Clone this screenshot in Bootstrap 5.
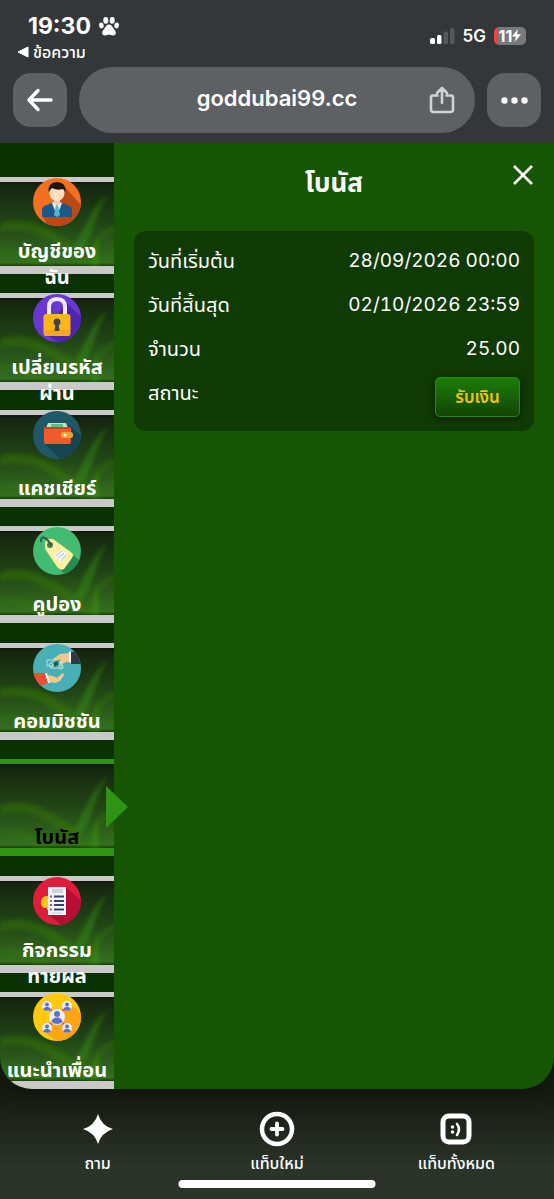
<!DOCTYPE html>
<html lang="th">
<head>
<meta charset="utf-8">
<meta name="viewport" content="width=device-width, initial-scale=1">
<title>โบนัส</title>
<link href="https://cdn.jsdelivr.net/npm/bootstrap@5.3.0/dist/css/bootstrap.min.css" rel="stylesheet">
<style>
body{font-family:Inter,"Noto Sans Thai","Noto Sans",sans-serif;color:#fff;background:#34373a}
svg{display:block}
.status{height:67px}
.clock{font-size:23px;font-weight:700;line-height:28px}
.back-app{font-size:16px;font-weight:500;line-height:24px;color:#fff}
.net{font-size:17px;font-weight:600;line-height:20px}
.batt{width:32px;height:18px;border-radius:5px;background:linear-gradient(90deg,#f2403a 4px,#77797b 4px);font-size:16px;font-weight:700;line-height:18px}
.addr{height:76px;padding:0 9px 10px}
.sq{width:54px;height:54px;border-radius:18px;background:#5e6164;border:0;color:#fff}
.pill{height:66px;border-radius:33px;background:#5e6164;min-width:0}
.url{font-size:22px;font-weight:600;line-height:28px;color:#fff;background:none;border:0;outline:0;text-align:center;min-width:0;width:0;padding:0 0 4px 30px}
.lower{overflow:hidden;background:linear-gradient(#34373a,#151a12 60px,#151a12 calc(100% - 110px),#1d2319 calc(100% - 80px),#2b3429 calc(100% - 30px),#2c332b)}
.app{background:#165503;border-radius:0 0 32px 32px;overflow:hidden;box-shadow:0 4px 20px #10150e}
.side{width:114px;background:#0a3102;padding-top:34px}
.tile{height:97px;border-top:5px solid #c9c9c9;border-bottom:8px solid #c9c9c9;color:#fff;background:linear-gradient(#14230f,#214415 50%,#356f1f 96%,#163e07)}
.tile:hover{color:#fff}
.tile.active{border-color:#2f9414;color:#000}
.swoosh{left:0;top:0;width:100%;height:100%}
.pic{left:33px;top:-4px;width:48px;height:48px}
.cap{left:0;right:0;top:56px;font-size:20px;font-weight:700;line-height:26px;white-space:nowrap}
.cap-one{top:60px}
.pointer{left:106px;top:22px;width:22px;height:42px;z-index:2}
.heading{font-size:26px;font-weight:700;line-height:32px}
.shut{right:20px;top:21px;border:0;background:none;color:#fff}
.info{background:#0f3a03;border-radius:12px;margin-top:32px;padding:8px 14px 6px;font-size:19px;line-height:24px;font-variant-numeric:tabular-nums}
.info dt{font-size:20px;font-weight:400;margin:0}
.line{height:44px}
.line dd{margin:0}
.state{padding-top:10px}
.claim{width:85px;height:40px;border:1px solid #2a8a12;border-radius:5px;background:linear-gradient(#1c7d06,#124502);color:#f1c40f;font-size:17px;font-weight:600;line-height:24px;padding:0;box-shadow:0 2px 6px #0008;margin-top:6px}
.tabs{height:110px;padding:22px 8px 0}
.tabs a{font-size:16px;font-weight:500;line-height:24px;color:#fff}
.home{width:197px;height:8px;border-radius:4px;background:#fff;left:50%;bottom:11px;transform:translateX(-50%)}
</style>
</head>
<body class="min-vh-100 d-flex flex-column">
<svg width="0" height="0" class="position-absolute" aria-hidden="true">
<defs>
<filter id="soft"><feGaussianBlur stdDeviation="2"/></filter>
<symbol id="leaf" viewBox="0 0 114 84" preserveAspectRatio="none">
<g filter="url(#soft)"><path d="M0 41C30 32 53 48 78 66L84 84C53 58 30 43 0 50Z" fill="#38830f" opacity=".4"/>
<path d="M74 66C84 48 92 24 108 12C95 30 93 58 81 70Z" fill="#2f8b0e" opacity=".5"/>
<path d="M84 84C91 65 98 49 114 43V49C101 55 94 68 92 84Z" fill="#35850c" opacity=".3"/>
<path d="M0 68C24 65 43 73 56 84H36C25 76 12 71 0 71Z" fill="#388c16" opacity=".2"/>
<path d="M92 84L97 52L99 84Z" fill="#3a9b10" opacity=".5"/></g>
<path d="M0 0H114V2H0Z" fill="#111" opacity=".5"/>
</symbol>
</defs>
</svg>

<header>
<div class="status d-flex justify-content-between">
<div class="ps-3 pt-2">
<div class="clock d-flex align-items-center gap-2 mt-1 ps-2 ms-1">19:30
<svg width="20" height="19" viewBox="0 0 20 19" fill="#fff"><ellipse cx="6.8" cy="3.4" rx="2.5" ry="3.300"/><ellipse cx="13.2" cy="3.4" rx="2.5" ry="3.300"/><ellipse cx="2.4" cy="8.4" rx="2.3" ry="3" transform="rotate(-12 2.4 8.4)"/><ellipse cx="17.6" cy="8.4" rx="2.3" ry="3" transform="rotate(12 17.6 8.4)"/><path d="M10 7.6C13 7.6 13.6 11 15.6 13C18 15.7 16.6 18.6 13.8 18.4C12.4 18.2 11.5 17.8 10 17.8S7.600 18.200 6.200 18.400C3.400 18.600 2 15.700 4.400 13C6.400 11 7 7.600 10 7.600Z"/></svg></div>
<a href="#" class="back-app text-decoration-none d-flex align-items-center gap-1"><svg width="13" height="12" viewBox="0 0 13 12"><path d="M2 6L12 1V11Z" fill="#fff" stroke="#fff" stroke-linejoin="round"/></svg><span>ข้อความ</span></a>
</div>
<div class="d-flex align-items-center gap-2 pe-4 pt-1 me-1">
<svg width="25" height="17" viewBox="0 0 25 17"><g fill="#fff"><rect y="11" width="5" height="6" rx="1.5"/><rect x="7" y="8" width="4.500" height="9" rx="1.500"/></g><g fill="#55585a"><rect x="13.500" y="4.500" width="4.500" height="12.500" rx="1.500"/><rect x="20" y="1" width="4.500" height="16" rx="1.500"/></g></svg>
<span class="net">5G</span>
<span class="batt d-flex align-items-center justify-content-center">11<svg width="9" height="13" viewBox="0 0 9 13"><path d="M6 0L0 7.500H4L2.500 13L9 5.300H5Z" fill="#fff"/></svg></span>
</div>
</div>
<div class="addr d-flex align-items-center">
<button class="sq d-flex align-items-center justify-content-center p-0 mx-1 flex-shrink-0" aria-label="กลับ"><svg width="28" height="24" viewBox="0 0 28 24" fill="none" stroke="#fff" stroke-width="3.400" stroke-linecap="round" stroke-linejoin="round"><path d="M12 2.500L3 12L12 21.500M3 12H25"/></svg></button>
<div class="pill d-flex align-items-center flex-grow-1 mx-2 px-3">
<input class="url flex-grow-1" aria-label="ที่อยู่เว็บ" value="goddubai99.cc">
<button class="border-0 bg-transparent p-0 me-1" aria-label="แชร์"><svg width="26" height="28" viewBox="0 0 26 28" fill="none" stroke="#d1d2d3" stroke-width="2.600" stroke-linecap="round" stroke-linejoin="round"><path d="M8.500 9.500H4Q2 9.500 2 11.500V23.500Q2 26 4.500 26H21.500Q24 26 24 23.500V11.500Q24 9.500 22 9.500H17.500M13 17V2.500M8 7L13 2L18 7"/></svg></button>
</div>
<button class="sq d-flex align-items-center justify-content-center p-0 mx-1 flex-shrink-0" aria-label="เมนู"><svg width="27" height="7" viewBox="0 0 27 7" fill="#fff"><circle cx="3.500" cy="3.500" r="3.200"/><circle cx="13.500" cy="3.500" r="3.200"/><circle cx="23.500" cy="3.500" r="3.200"/></svg></button>
</div>
</header>

<div class="lower flex-grow-1 d-flex flex-column">
<main class="app d-flex flex-grow-1">
<nav class="side d-flex flex-column justify-content-between flex-shrink-0 text-center">
<a href="#" class="tile d-block position-relative text-decoration-none"><svg class="swoosh position-absolute"><use href="#leaf"/></svg>
<svg class="pic position-absolute" viewBox="0 0 48 48"><defs><clipPath id="round"><circle cx="24" cy="24" r="24"/></clipPath></defs><circle cx="24" cy="24" r="24" fill="#f37021"/><g clip-path="url(#round)"><path d="M31 8L48 27V48H15L10 39L25 24Z" fill="#b94a16"/></g><path d="M9 39V32Q9 28 14 27L21 24H27L34 27Q39 28 39 32V39Z" fill="#1d568a"/><path d="M19 25L24 38L29 25L25 23H22Z" fill="#e8f2f4"/><path d="M23 27H25L27 37L24 39L21 37Z" fill="#55b7c9"/><path d="M21 19H27V25L24 28L21 25Z" fill="#f1c8a0"/><ellipse cx="24" cy="15" rx="7.500" ry="8" fill="#ffe0bd"/><path d="M15.500 14Q15 4 24 4T32.500 14L30 11Q24 13 19 10Z" fill="#20150f"/></svg>
<span class="cap position-absolute">บัญชีของ<br>ฉัน</span></a>

<a href="#" class="tile d-block position-relative text-decoration-none"><svg class="swoosh position-absolute"><use href="#leaf"/></svg>
<svg class="pic position-absolute" viewBox="0 0 48 48"><circle cx="24" cy="24" r="24" fill="#6938d2"/><g clip-path="url(#round)"><path d="M33 8L48 23V48H25L12 40Z" fill="#4e25ac"/></g><path d="M16 21V13Q16 5 24 5T32 13V21" fill="none" stroke="#eeeafc" stroke-width="4"/><rect x="10.500" y="20" width="27" height="22" rx="3" fill="#fdb51b"/><path d="M11 36H37V40Q37 42 34 42H14Q11 42 11 40Z" fill="#f4a719"/><circle cx="24" cy="28" r="3.500" fill="#45414a"/><path d="M22.500 29H25.500L26.500 37H21.500Z" fill="#45414a"/></svg>
<span class="cap position-absolute">เปลี่ยนรหัส<br>ผ่าน</span></a>

<a href="#" class="tile d-block position-relative text-decoration-none"><svg class="swoosh position-absolute"><use href="#leaf"/></svg>
<svg class="pic position-absolute" viewBox="0 0 48 48"><circle cx="24" cy="24" r="24" fill="#1f5968"/><g clip-path="url(#round)"><path d="M36 14L48 25V48H27L11 32Z" fill="#164551"/></g><path d="M13 17L15 12H33L35 17Z" fill="#bce4c8"/><path d="M18 13H30V16H18Z" fill="#67bb8b"/><rect x="11" y="16" width="27" height="17" rx="2" fill="#f15a2d"/><path d="M11 16H37V18H11Z" fill="#cd4524"/><rect x="28" y="21" width="12" height="6" rx="2.500" fill="#e5a33a"/><circle cx="32" cy="24" r="1.500" fill="#fff0b8"/></svg>
<span class="cap cap-one position-absolute">แคชเชียร์</span></a>

<a href="#" class="tile d-block position-relative text-decoration-none"><svg class="swoosh position-absolute"><use href="#leaf"/></svg>
<svg class="pic position-absolute" viewBox="0 0 48 48"><circle cx="24" cy="24" r="24" fill="#43bb70"/><g clip-path="url(#round)"><path d="M39 27L48 35V48H33L24 40Z" fill="#278c50"/></g><path d="M12 15Q14 11 20 12L39 26Q41 28 39 31L31 42Q28 44 25 41L12 22Z" fill="#fff0a2"/><circle cx="17" cy="18" r="3" fill="#3b7f55"/><path d="M18 18C13 9 7 8 8 15" fill="none" stroke="#315c4b" stroke-width="2"/><path d="M21 29L29 22L35 28L28 36Z" fill="#f8f7f2"/><path d="M23 29L29 24M25 31L31 26M28 34L33 28" stroke="#b9b6cd" stroke-width="1"/></svg>
<span class="cap cap-one position-absolute">คูปอง</span></a>

<a href="#" class="tile d-block position-relative text-decoration-none"><svg class="swoosh position-absolute"><use href="#leaf"/></svg>
<svg class="pic position-absolute" viewBox="0 0 48 48"><circle cx="24" cy="24" r="24" fill="#48b0b5"/><g clip-path="url(#round)"><path d="M38 8L48 7V20H38Z" fill="#363746"/><path d="M0 29L12 29L16 39L4 43Z" fill="#ee5035"/></g><path d="M37 9L27 10L20 15L21 17L28 15L25 20L27 21L33 18L38 18Z" fill="#f8c58d"/><path d="M13 31L20 32L24 34L30 29L31 31L27 37L22 39L15 38Z" fill="#f8c58d"/><path d="M36 7L38 8V19L36 18Z" fill="#fff"/><path d="M12 29H14L17 39H15Z" fill="#fff"/><g fill="none" stroke="#b2dfda"><path d="M14 16H20V22H14ZM17 24H29V18"/><circle cx="18" cy="21" r="2"/><circle cx="28" cy="23" r="2"/></g><path d="M20 19L24 17L26 20L22 23Z" fill="#185f57"/></svg>
<span class="cap cap-one position-absolute">คอมมิชชัน</span></a>

<a href="#" class="tile active d-block position-relative text-decoration-none" aria-current="page"><svg class="swoosh position-absolute"><use href="#leaf"/></svg>
<span class="cap cap-one position-absolute">โบนัส</span>
<svg class="pointer position-absolute" viewBox="0 0 22 42"><path d="M0 0L22 21L0 42Z" fill="#2f9414"/></svg></a>

<a href="#" class="tile d-block position-relative text-decoration-none"><svg class="swoosh position-absolute"><use href="#leaf"/></svg>
<svg class="pic position-absolute" viewBox="0 0 48 48"><circle cx="24" cy="24" r="24" fill="#e11b3c"/><g clip-path="url(#round)"><path d="M33 10L48 24V48H28L15 37Z" fill="#b70d32"/></g><path d="M15 19A6.500 6.500 0 0 0 11 31L14 31V33H19V19Z" fill="#ffc80b"/><rect x="15" y="10" width="18" height="28" fill="#f4f5fa"/><path d="M19 13H30M19 15H30" stroke="#a9aebc"/><path d="M21 19.500H31M21 24H31M21 28H31M21 32.500H31" stroke="#383f6b" stroke-width="1.800"/><path d="M17 19.500H19M17 24H19M17 28H19M17 32.500H19" stroke="#c34a68" stroke-width="2"/><path d="M18 36H30" stroke="#c9cbd5"/></svg>
<span class="cap position-absolute">กิจกรรม<br>ทายผล</span></a>

<a href="#" class="tile d-block position-relative text-decoration-none"><svg class="swoosh position-absolute"><use href="#leaf"/></svg>
<svg class="pic position-absolute" viewBox="0 0 48 48"><defs><g id="person"><circle cx="0" cy="0" r="5" fill="#eceef9"/><circle cx="0" cy="-1.500" r="2" fill="#5972c8"/><path d="M-4 3.500Q-3 .8 0 .8T4 3.500Q0 6 -4 3.500Z" fill="#5972c8"/></g></defs><circle cx="24" cy="24" r="24" fill="#ffc90d"/><g clip-path="url(#round)"><path d="M37 10L48 21V48H24L10 38Z" fill="#ffa414"/></g><path d="M14 13L34 35M34 13L14 35" stroke="#df6443" stroke-width="2.500"/><use href="#person" x="14" y="13"/><use href="#person" x="34" y="13"/><use href="#person" x="14" y="35"/><use href="#person" x="34" y="35"/><circle cx="24" cy="24" r="8" fill="#eceef9"/><circle cx="24" cy="21" r="3" fill="#5972c8"/><path d="M18.500 29Q19 24.500 24 24.500T29.500 29Q24 33 18.500 29Z" fill="#5972c8"/></svg>
<span class="cap cap-one position-absolute">แนะนำเพื่อน</span></a>
</nav>

<section class="flex-grow-1 position-relative px-3">
<div class="px-1 pt-4">
<h1 class="heading text-center mb-0">โบนัส</h1>
<button class="shut position-absolute p-0" aria-label="ปิด"><svg width="22" height="22" viewBox="0 0 22 22" stroke="#fff" stroke-width="2.600"><path d="M2 2L20 20M20 2L2 20"/></svg></button>
<dl class="info mb-0">
<div class="line d-flex justify-content-between align-items-center"><dt>วันที่เริ่มต้น</dt><dd>28/09/2026 00:00</dd></div>
<div class="line d-flex justify-content-between align-items-center"><dt>วันที่สิ้นสุด</dt><dd>02/10/2026 23:59</dd></div>
<div class="line d-flex justify-content-between align-items-center"><dt>จำนวน</dt><dd>25.00</dd></div>
<div class="d-flex justify-content-between"><dt class="state">สถานะ</dt><dd class="m-0 pb-2"><button class="claim">รับเงิน</button></dd></div>
</dl>
</div>
</section>
</main>

<footer class="tabs position-relative d-flex text-center">
<a href="#" class="col d-flex flex-column align-items-center gap-1 text-decoration-none"><svg width="36" height="36" viewBox="0 0 36 36"><path d="M18 3Q21.500 15 33 18Q21.500 21.500 18 33Q14.500 21.500 3 18Q14.500 15 18 3Z" fill="#fff"/></svg>ถาม</a>
<a href="#" class="col d-flex flex-column align-items-center gap-1 text-decoration-none"><svg width="36" height="36" viewBox="0 0 36 36" fill="none" stroke="#fff" stroke-width="4.500" stroke-linecap="round"><circle cx="18" cy="18" r="15"/><path d="M18 12.500V23.500M12.500 18H23.500" stroke-width="3.800"/></svg>แท็บใหม่</a>
<a href="#" class="col d-flex flex-column align-items-center gap-1 text-decoration-none"><svg width="36" height="36" viewBox="0 0 36 36" fill="none" stroke="#fff" stroke-linecap="round"><rect x="5" y="5" width="26" height="26" rx="6" stroke-width="5"/><path d="M19 13Q23 18 19 24" stroke-width="2.600"/><circle cx="14.500" cy="16" r="1" stroke-width="1.500" fill="#fff"/><circle cx="14.500" cy="21" r="1" stroke-width="1.500" fill="#fff"/></svg>แท็บทั้งหมด</a>
<div class="home position-absolute"></div>
</footer>
</div>
<script src="https://cdn.jsdelivr.net/npm/bootstrap@5.3.0/dist/js/bootstrap.bundle.min.js"></script>
</body>
</html>
